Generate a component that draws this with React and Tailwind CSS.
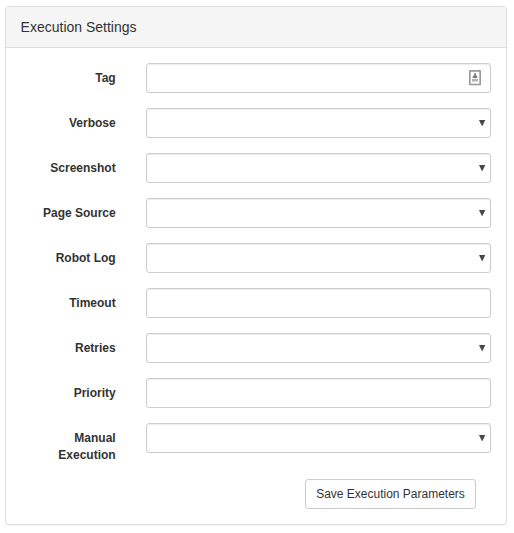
const fields = [
  { label: 'Tag', type: 'tag' },
  { label: 'Verbose', type: 'select' },
  { label: 'Screenshot', type: 'select' },
  { label: 'Page Source', type: 'select' },
  { label: 'Robot Log', type: 'select' },
  { label: 'Timeout', type: 'text' },
  { label: 'Retries', type: 'select' },
  { label: 'Priority', type: 'text' },
  { label: 'Manual Execution', type: 'select' },
];

const controlClass =
  'block h-[30px] w-full appearance-none rounded-[3px] border border-[#ccc] bg-white px-2.5 text-xs text-[#555] shadow-[inset_0_1px_1px_rgba(0,0,0,0.075)] outline-none';

function Caret() {
  return (
    <svg className="pointer-events-none absolute top-3 right-[5px] h-[7px] w-[7px]" viewBox="0 0 7 7" aria-hidden="true">
      <path d="M0 0H6.3L3.4 6H2.9Z" fill="#484848" />
    </svg>
  );
}

function AutofillIcon() {
  return (
    <svg className="pointer-events-none absolute top-[7px] right-[10px] h-4 w-3" viewBox="0 0 12 16" aria-hidden="true">
      <rect x="0.8" y="0.9" width="10.4" height="13.6" rx="0.5" fill="#fff" stroke="#999" strokeWidth="1.7" />
      <path d="M5.2 3H6.8V5L8.3 6.6V8H3.7V6.6L5.2 5Z" fill="#7c7c7c" />
      <path d="M3 9H9V11.6H3Z" fill="#b5b5b5" />
    </svg>
  );
}

function Field({ label, type }) {
  return (
    <div className="flex items-start">
      <label className="w-[109.7px] shrink-0 pt-[7px] pl-[15px] text-right text-xs leading-[17px] font-bold">
        {label}
      </label>
      <div className="relative ml-[30.3px] w-[345px]">
        {type === 'select' ? (
          <select className={controlClass} aria-label={label} />
        ) : (
          <input className={controlClass} type="text" aria-label={label} />
        )}
        {type === 'select' && <Caret />}
        {type === 'tag' && <AutofillIcon />}
      </div>
    </div>
  );
}

export default function App() {
  return (
    <div className="h-[533px] w-[514px] bg-white pt-1.5 pl-[5px] font-['Liberation_Sans',Arial,sans-serif] text-[#333]">
      <section className="h-[519px] w-[502px] rounded-[4px] border border-[#ddd] bg-white shadow-[0_1px_1px_rgba(0,0,0,0.05)]">
        <header className="h-[41px] rounded-t-[3px] border-b border-[#ddd] bg-[#f5f5f5] px-[14.6px] py-2.5">
          <h3 className="text-sm leading-5">Execution Settings</h3>
        </header>
        <form className="flex flex-col gap-[15px] pt-[15px]">
          {fields.map((field) => (
            <Field key={field.label} {...field} />
          ))}
          <div className="flex justify-end pr-[30px]">
            <button
              type="button"
              className="h-[30px] w-[171px] rounded-[3px] border border-[#ccc] bg-white text-center text-xs leading-[18px] whitespace-nowrap"
            >
              Save Execution Parameters
            </button>
          </div>
        </form>
      </section>
    </div>
  );
}
